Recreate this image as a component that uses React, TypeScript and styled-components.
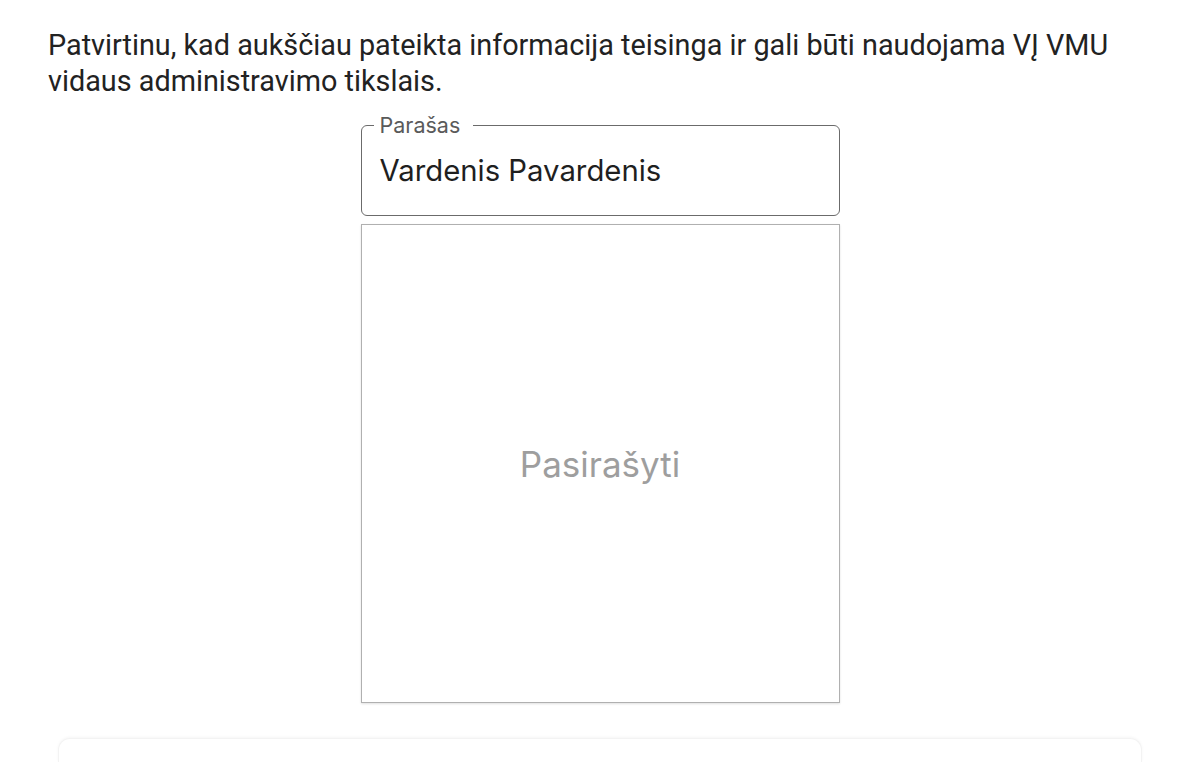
import React from "react";
import styled, { createGlobalStyle } from "styled-components";

const GlobalStyle = createGlobalStyle`
  html, body {
    margin: 0;
    padding: 0;
    background: #ffffff;
  }
  body {
    font-family: Roboto, "Noto Sans", sans-serif;
    color: #222222;
  }
`;

const Page = styled.div`
  display: flex;
  flex-direction: column;
  padding: 27px 48px 0 48px;
  height: 762px;
  box-sizing: border-box;
  overflow: hidden;
`;

const Statement = styled.p`
  margin: 0;
  font-size: 28.8px;
  line-height: 36px;
  color: #222222;
`;

const FormColumn = styled.div`
  display: flex;
  flex-direction: column;
  align-items: center;
  gap: 8px;
  margin-top: 26px;
`;

const Field = styled.div`
  position: relative;
  width: 479px;
  height: 91px;
  box-sizing: border-box;
  border: 1.5px solid #6b6b6b;
  border-radius: 6px;
  padding: 0 18px;
  display: flex;
  align-items: center;
`;

const Label = styled.span`
  position: absolute;
  top: -12px;
  left: 12px;
  padding: 0 13px 0 6px;
  background: #ffffff;
  font-family: Inter, Roboto, sans-serif;
  font-size: 21.5px;
  line-height: 22px;
  color: #5a5a5a;
`;

const Value = styled.span`
  font-family: Inter, Roboto, sans-serif;
  font-size: 29.3px;
  color: #1f1f1f;
`;

const SignatureBox = styled.div`
  width: 479px;
  height: 479px;
  box-sizing: border-box;
  border: 1.5px solid #b0b0b0;
  box-shadow: 0 1px 2px rgba(0, 0, 0, 0.12);
  display: flex;
  align-items: center;
  justify-content: center;
  font-family: Inter, Roboto, sans-serif;
  font-size: 35px;
  color: #9e9e9e;
  cursor: crosshair;
`;

const BottomCard = styled.div`
  margin: 35px 10px 0 10px;
  flex: 1;
  border: 1px solid #f3f3f3;
  border-bottom: none;
  border-radius: 12px 12px 0 0;
  box-shadow: 0 -1px 3px rgba(0, 0, 0, 0.04);
  background: #ffffff;
`;

export default function App() {
  return (
    <>
      <GlobalStyle />
      <Page>
        <Statement>
          Patvirtinu, kad aukščiau pateikta informacija teisinga ir gali būti naudojama VĮ VMU
          vidaus administravimo tikslais.
        </Statement>
        <FormColumn>
          <Field>
            <Label>Parašas</Label>
            <Value>Vardenis Pavardenis</Value>
          </Field>
          <SignatureBox>Pasirašyti</SignatureBox>
        </FormColumn>
        <BottomCard />
      </Page>
    </>
  );
}
